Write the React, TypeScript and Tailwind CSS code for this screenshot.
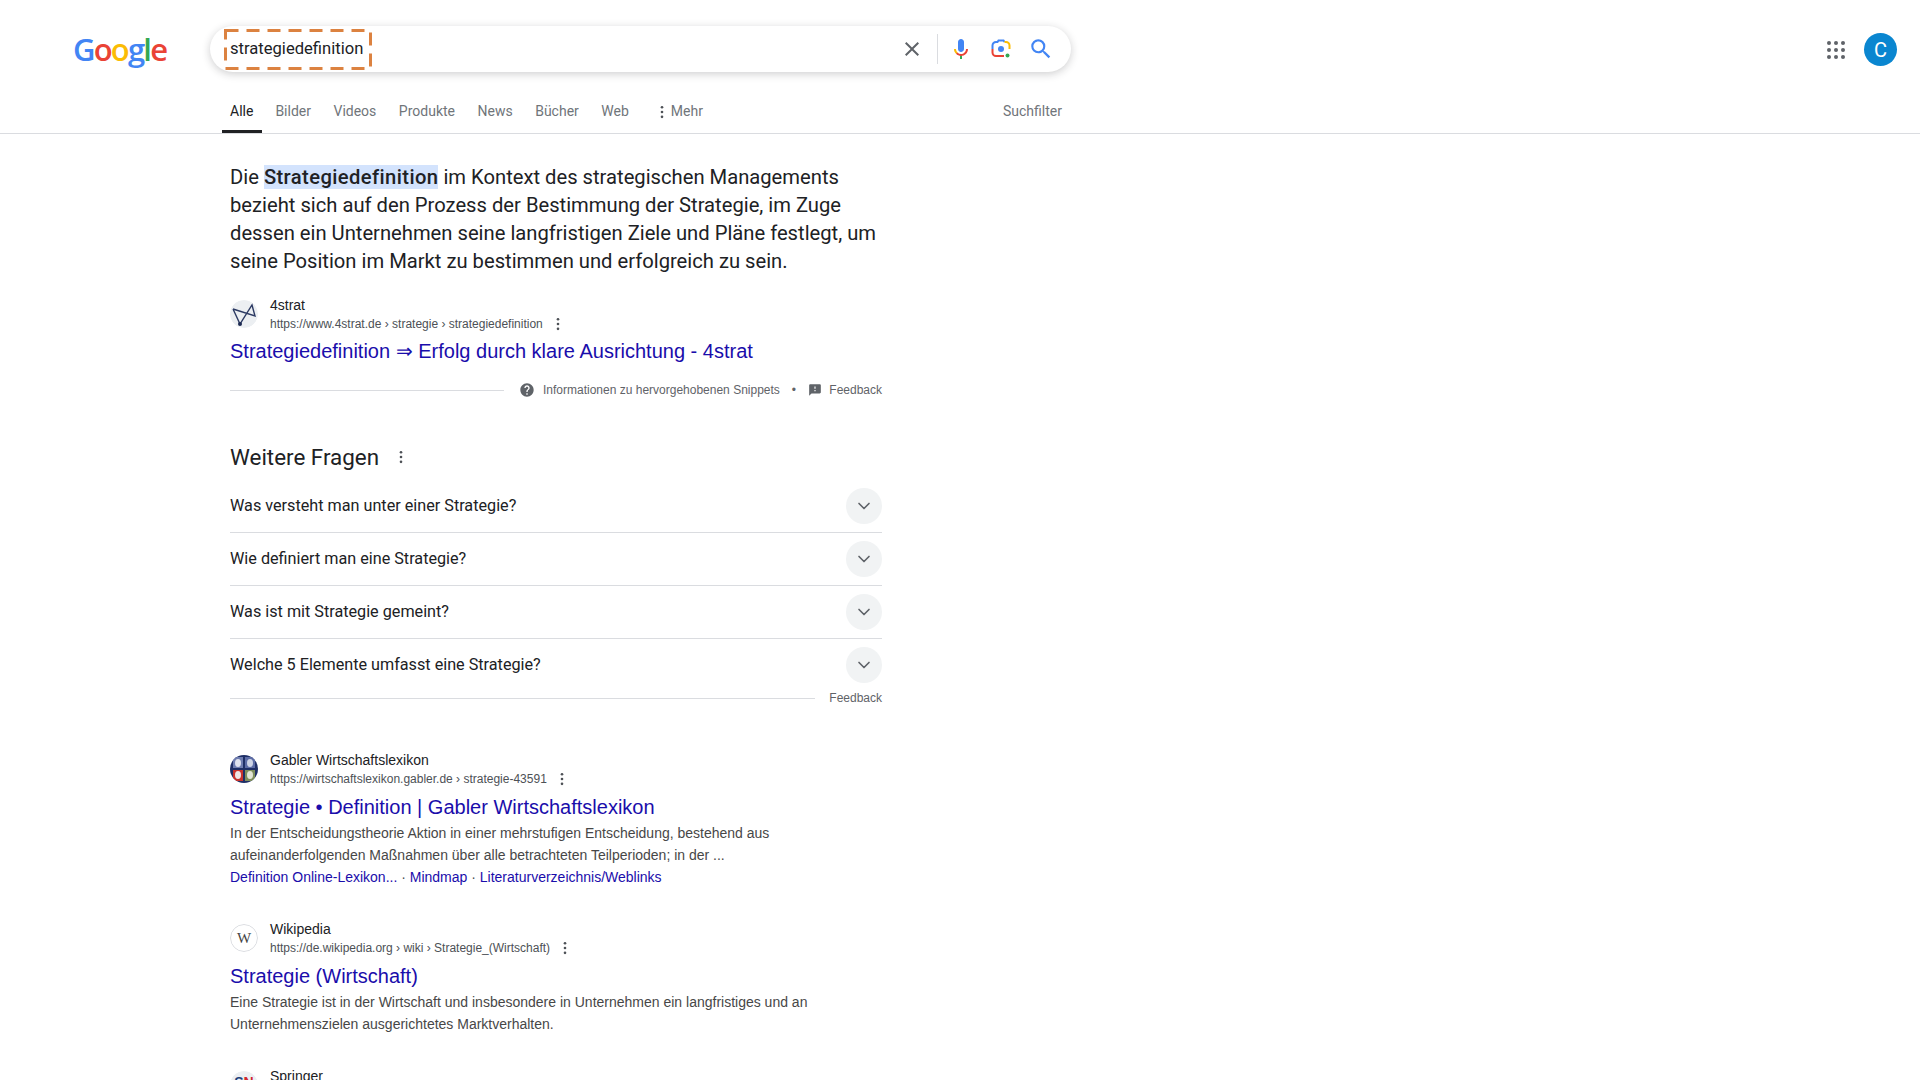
import { ChevronDown } from "lucide-react";

const tabs = ["Bilder", "Videos", "Produkte", "News", "Bücher", "Web"];
const questions = [
  "Was versteht man unter einer Strategie?",
  "Wie definiert man eine Strategie?",
  "Was ist mit Strategie gemeint?",
  "Welche 5 Elemente umfasst eine Strategie?",
];

const Dots = ({ className = "" }: { className?: string }) => (
  <svg viewBox="0 0 4 16" className={`w-[4px] h-[14px] ${className}`} fill="#4d5156">
    <circle cx="2" cy="2.5" r="1.5" />
    <circle cx="2" cy="8" r="1.5" />
    <circle cx="2" cy="13.5" r="1.5" />
  </svg>
);

const GoogleLogo = () => (
  <div className="text-[31px] leading-none tracking-[-1.8px] font-semibold font-['Open_Sans','Noto_Sans',sans-serif]">
    <span className="text-[#4285f4]">G</span>
    <span className="text-[#ea4335]">o</span>
    <span className="text-[#fbbc05]">o</span>
    <span className="text-[#4285f4]">g</span>
    <span className="text-[#34a853]">l</span>
    <span className="text-[#ea4335]">e</span>
  </div>
);

const SearchActions = () => (
  <div className="flex items-center">
    <svg viewBox="0 0 24 24" className="w-6 h-6 mr-[13px]" fill="#5f6368">
      <path d="M19 6.41L17.59 5 12 10.59 6.41 5 5 6.41 10.59 12 5 17.59 6.41 19 12 13.41 17.59 19 19 17.59 13.41 12z" />
    </svg>
    <div className="w-px h-[30px] bg-[#dadce0] mr-[11px]" />
    <svg viewBox="0 0 24 24" className="w-6 h-6 mr-4">
      <path fill="#4285f4" d="m12 15c1.66 0 3-1.31 3-2.97v-7.02c0-1.66-1.34-3.01-3-3.01s-3 1.34-3 3.01v7.02c0 1.66 1.34 2.97 3 2.97z" />
      <path fill="#34a853" d="m11 18.08h2v3.92h-2z" />
      <path fill="#fbbc04" d="m7.05 16.87c-1.27-1.33-2.05-2.83-2.05-4.87h2c0 1.45 0.56 2.42 1.47 3.38v0.32l-1.15 1.18z" />
      <path fill="#ea4335" d="m12 16.93a4.97 5.25 0 0 1 -3.54 -1.55l-1.41 1.49c1.26 1.34 3.02 2.13 4.95 2.13 3.87 0 6.99-2.92 6.99-6.99h-1.99c0 2.92-2.24 5-5 5z" />
    </svg>
    <svg viewBox="0 0 24 24" className="w-6 h-6 mr-[15px]" fill="none" strokeWidth="2">
      <path d="M3.5 12V8.5a3.5 3.5 0 0 1 3.5-3.5h1.5l1-1.5h5l1 1.5" stroke="#4285f4" />
      <path d="M15.5 5H17a3.5 3.5 0 0 1 3.5 3.5V12" stroke="#fbbc04" />
      <path d="M3.5 12v3.5A3.5 3.5 0 0 0 7 19h8" stroke="#ea4335" />
      <circle cx="12" cy="12" r="3" fill="#4285f4" />
      <circle cx="18.5" cy="18.5" r="2" fill="#34a853" />
    </svg>
    <svg viewBox="0 0 24 24" className="w-[26px] h-[26px] mr-[17px]" fill="#4285f4">
      <path d="M15.5 14h-.79l-.28-.27A6.471 6.471 0 0 0 16 9.5 6.5 6.5 0 1 0 9.5 16c1.61 0 3.09-.59 4.23-1.57l.27.28v.79l5 4.99L20.49 19l-4.99-5zm-6 0C7.01 14 5 11.99 5 9.5S7.01 5 9.5 5 14 7.01 14 9.5 11.99 14 9.5 14z" />
    </svg>
  </div>
);

const Header = () => (
  <header className="border-b border-[#dadce0] h-[134px] shrink-0">
    <div className="flex items-center pt-[26px]">
      <div className="w-[210px] pl-[73px] shrink-0">
        <GoogleLogo />
      </div>
      <div className="w-[861px] h-[46px] rounded-full bg-white shadow-[0_2px_8px_rgba(32,33,36,0.22)] flex items-center justify-between pl-[14px]">
        <div className="relative h-[41px] w-[148px] flex items-center pl-[6px] text-[16.6px] text-[#202124] font-['Roboto',sans-serif]">
          strategiedefinition
          <svg className="absolute inset-0 w-full h-full" fill="none">
            <rect x="1.5" y="1.5" width="145" height="38" stroke="#dc8240" strokeWidth="3" strokeDasharray="13 8" />
          </svg>
        </div>
        <SearchActions />
      </div>
      <div className="ml-auto flex items-center pr-[23px] pt-[1px]">
        <div className="grid grid-cols-3 gap-[3px] mr-[19px]">
          {Array.from({ length: 9 }).map((_, i) => (
            <div key={i} className="w-[4px] h-[4px] rounded-full bg-[#5f6368]" />
          ))}
        </div>
        <div className="w-[33px] h-[33px] rounded-full bg-[#0a86d0] flex items-center justify-center text-white text-[20px] font-['Roboto',sans-serif]">
          C
        </div>
      </div>
    </div>
    <nav className="flex pl-[230px] mt-[26px] w-[1062px] h-[34px] text-[14px] text-[#70757a] font-['Roboto',sans-serif] leading-[27px]">
      <div className="relative text-[#202124] mr-[22px] h-[34px]">
        Alle
        <div className="absolute left-[-8px] right-[-9px] bottom-[-1px] h-[3px] bg-[#202124]" />
      </div>
      <div className="flex gap-[22.5px]">
        {tabs.map((t) => (
          <span key={t}>{t}</span>
        ))}
      </div>
      <div className="flex items-center h-[27px] gap-[7px] ml-[31px]">
        <Dots />
        <span>Mehr</span>
      </div>
      <span className="ml-auto">Suchfilter</span>
    </nav>
  </header>
);

const ResultHead = ({
  name,
  url,
  icon,
}: {
  name: string;
  url: string;
  icon: React.ReactNode;
}) => (
  <div className="flex items-center h-[32px]">
    <div className="w-[28px] h-[28px] rounded-full overflow-hidden shrink-0 mr-[12px]">{icon}</div>
    <div className="font-['Liberation_Sans',sans-serif]">
      <div className="text-[14px] leading-[20px] text-[#202124]">{name}</div>
      <div className="flex items-center text-[12px] leading-[18px] text-[#4d5156]">
        {url}
        <Dots className="ml-[13px]" />
      </div>
    </div>
  </div>
);

const StratIcon = () => (
  <svg viewBox="0 0 28 28" className="w-full h-full">
    <circle cx="14" cy="14" r="14" fill="#eceff2" />
    <path d="M3 9 L25 16 L22 5 L10 24 L3 9" fill="none" stroke="#2c3a63" strokeWidth="1.4" />
    <circle cx="10" cy="24" r="2" fill="#1d2a52" />
  </svg>
);

const GablerIcon = () => (
  <svg viewBox="0 0 28 28" className="w-full h-full">
    <rect width="28" height="28" fill="#1f2f66" />
    <rect x="3" y="2" width="10" height="11" fill="#6f7db0" />
    <rect x="15" y="2" width="10" height="11" fill="#5c6ca6" />
    <ellipse cx="8" cy="8" rx="3" ry="4" fill="#dfe2ee" />
    <ellipse cx="20" cy="8" rx="3" ry="4" fill="#cfd5e6" />
    <rect x="3" y="15" width="10" height="11" fill="#c9332e" />
    <rect x="15" y="15" width="10" height="11" fill="#7f8f5c" />
    <ellipse cx="8" cy="20" rx="3" ry="4" fill="#efe6e6" />
    <ellipse cx="20" cy="20" rx="3" ry="4" fill="#e3e6d6" />
  </svg>
);

const WikiIcon = () => (
  <div className="w-full h-full rounded-full border border-[#dadce0] flex items-center justify-center text-[15px] text-[#444] font-['Liberation_Serif',serif]">
    W
  </div>
);

const SpringerIcon = () => (
  <div className="w-full h-full rounded-full bg-[#eceff2] flex justify-center pt-[4px] text-[14px] leading-none font-bold font-['Liberation_Sans',sans-serif]">
    <span className="text-[#1d3f7c]">S</span>
    <span className="text-[#d0262d]">N</span>
  </div>
);

const Title = ({ children }: { children: React.ReactNode }) => (
  <h3 className="text-[20px] leading-[26px] text-[#1a0dab] font-['Liberation_Sans',sans-serif]">{children}</h3>
);

const Snippet = () => (
  <section>
    <p className="text-[20.2px] leading-[28px] text-[#202124] font-['Roboto',sans-serif]">
      Die <b className="font-medium tracking-[0.4px] bg-[#d3e3fd]">Strategiedefinition</b> im Kontext des strategischen
      Managements bezieht sich auf den Prozess der Bestimmung der Strategie, im Zuge dessen ein Unternehmen seine
      langfristigen Ziele und Pläne festlegt, um seine Position im Markt zu bestimmen und erfolgreich zu sein.
    </p>
    <div className="mt-[23px]">
      <ResultHead name="4strat" url="https://www.4strat.de › strategie › strategiedefinition" icon={<StratIcon />} />
    </div>
    <div className="mt-[8px]">
      <Title>Strategiedefinition ⇒ Erfolg durch klare Ausrichtung - 4strat</Title>
    </div>
    <div className="flex items-center mt-[18px] h-[16px] text-[12px] text-[#5f6368] whitespace-nowrap font-['Liberation_Sans',sans-serif]">
      <div className="h-px bg-[#dadce0] w-[274px] mr-[15px] shrink-0" />
      <svg viewBox="0 0 24 24" className="w-[16px] h-[16px] mr-[8px] shrink-0" fill="#5f6368">
        <path d="M12 2C6.48 2 2 6.48 2 12s4.48 10 10 10 10-4.48 10-10S17.52 2 12 2zm1 17h-2v-2h2v2zm2.07-7.75l-.9.92C13.45 12.9 13 13.5 13 15h-2v-.5c0-1.1.45-2.1 1.17-2.83l1.24-1.26c.37-.36.59-.86.59-1.41 0-1.1-.9-2-2-2s-2 .9-2 2H8c0-2.21 1.79-4 4-4s4 1.79 4 4c0 .88-.36 1.68-.93 2.25z" />
      </svg>
      <span>Informationen zu hervorgehobenen Snippets</span>
      <span className="ml-[12px]">•</span>
      <svg viewBox="0 0 24 24" className="w-[14px] h-[14px] ml-[12px] shrink-0" fill="#5f6368">
        <path d="M20 2H4c-1.1 0-2 .9-2 2v18l4-4h14c1.1 0 2-.9 2-2V4c0-1.1-.9-2-2-2zm-7 12h-2v-2h2v2zm0-4h-2V6h2v4z" />
      </svg>
      <span className="ml-auto">Feedback</span>
    </div>
  </section>
);

const Questions = () => (
  <section className="mt-[43px]">
    <div className="flex items-center h-[32px]">
      <h2 className="text-[22.4px] leading-[32px] text-[#202124] font-['Roboto',sans-serif]">Weitere Fragen</h2>
      <Dots className="ml-[20px]" />
    </div>
    <div className="mt-[7px]">
      {questions.map((q, i) => (
        <div
          key={q}
          className={`flex items-center justify-between h-[53px] text-[16.2px] text-[#202124] font-['Roboto',sans-serif] border-b ${
            i < 3 ? "border-[#dadce0]" : "border-transparent"
          }`}
        >
          {q}
          <div className="w-[36px] h-[36px] rounded-full bg-[#f1f3f4] flex items-center justify-center">
            <ChevronDown size={20} color="#5f6368" strokeWidth={2} />
          </div>
        </div>
      ))}
    </div>
    <div className="flex items-center h-[16px] -mt-[2px] text-[12px] text-[#5f6368] font-['Liberation_Sans',sans-serif]">
      <div className="h-px bg-[#dadce0] flex-1 mr-[14px]" />
      Feedback
    </div>
  </section>
);

const Results = () => (
  <>
    <article className="mt-[47px]">
      <ResultHead name="Gabler Wirtschaftslexikon" url="https://wirtschaftslexikon.gabler.de › strategie-43591" icon={<GablerIcon />} />
      <div className="mt-[9px]">
        <Title>Strategie • Definition | Gabler Wirtschaftslexikon</Title>
      </div>
      <p className="mt-[2px] text-[14px] leading-[22px] text-[#474747] font-['Liberation_Sans',sans-serif] w-[600px]">
        In der Entscheidungstheorie Aktion in einer mehrstufigen Entscheidung, bestehend aus aufeinanderfolgenden
        Maßnahmen über alle betrachteten Teilperioden; in der ...
      </p>
      <div className="text-[14px] leading-[22px] text-[#1a0dab] font-['Liberation_Sans',sans-serif]">
        Definition Online-Lexikon... <span className="text-[#4d5156]">·</span> Mindmap{" "}
        <span className="text-[#4d5156]">·</span> Literaturverzeichnis/Weblinks
      </div>
    </article>
    <article className="mt-[34px]">
      <ResultHead name="Wikipedia" url="https://de.wikipedia.org › wiki › Strategie_(Wirtschaft)" icon={<WikiIcon />} />
      <div className="mt-[9px]">
        <Title>Strategie (Wirtschaft)</Title>
      </div>
      <p className="mt-[2px] text-[14px] leading-[22px] text-[#474747] font-['Liberation_Sans',sans-serif] w-[620px]">
        Eine Strategie ist in der Wirtschaft und insbesondere in Unternehmen ein langfristiges und an
        Unternehmenszielen ausgerichtetes Marktverhalten.
      </p>
    </article>
    <article className="mt-[34px]">
      <ResultHead name="Springer" url="https://link.springer.com › content › pdf" icon={<SpringerIcon />} />
    </article>
  </>
);

export default function App() {
  return (
    <div className="w-[1920px] h-[1080px] overflow-hidden bg-white flex flex-col">
      <Header />
      <main className="w-[652px] ml-[230px] pt-[29px]">
        <Snippet />
        <Questions />
        <Results />
      </main>
    </div>
  );
}
